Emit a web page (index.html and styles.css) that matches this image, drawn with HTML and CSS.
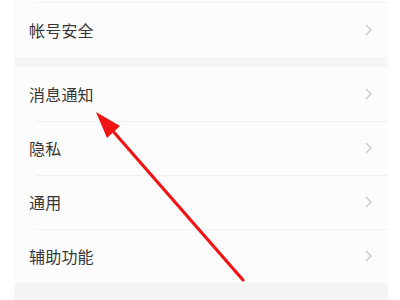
FILE: index.html
```html
<!DOCTYPE html>
<html lang="zh">
<head>
<meta charset="utf-8">
<link rel="stylesheet" href="styles.css">
</head>
<body>
<div class="page">
  <div class="card card-first">
    <div class="row sep"><span class="label">帐号安全</span><svg class="chev" width="7" height="12" viewBox="0 0 7 12"><polyline points="1,1 6,6 1,11"/></svg></div>
  </div>
  <div class="card">
    <div class="row"><span class="label">消息通知</span><svg class="chev" width="7" height="12" viewBox="0 0 7 12"><polyline points="1,1 6,6 1,11"/></svg></div>
    <div class="row sep"><span class="label">隐私</span><svg class="chev" width="7" height="12" viewBox="0 0 7 12"><polyline points="1,1 6,6 1,11"/></svg></div>
    <div class="row sep"><span class="label">通用</span><svg class="chev" width="7" height="12" viewBox="0 0 7 12"><polyline points="1,1 6,6 1,11"/></svg></div>
    <div class="row sep"><span class="label">辅助功能</span><svg class="chev" width="7" height="12" viewBox="0 0 7 12"><polyline points="1,1 6,6 1,11"/></svg></div>
  </div>
</div>
<svg class="arrow" width="400" height="300" viewBox="0 0 400 300">
  <line x1="243" y1="280" x2="112" y2="130" stroke="#f01414" stroke-width="3.2" stroke-linecap="round"/>
  <polygon points="96,112 120,126 107,138" fill="#f01414"/>
</svg>
</body>
</html>
```
FILE: styles.css
```css
html, body {
  margin: 0;
  padding: 0;
  background: #ffffff;
}
body {
  width: 400px;
  height: 300px;
  overflow: hidden;
  position: relative;
  font-family: "Noto Sans CJK SC", "Noto Sans", sans-serif;
}
.page {
  margin: 0 12px 0 14px;
  background: #f5f5f7;
  height: 300px;
  display: flex;
  flex-direction: column;
  gap: 10px;
}
.card {
  background: #fcfcfc;
}
.card-first {
  padding-top: 2px;
}
.row {
  position: relative;
  height: 54px;
  display: flex;
  align-items: center;
  justify-content: space-between;
  padding: 0 16px 0 15px;
}
.card-first .row {
  height: 55px;
}
.row.sep::before {
  content: "";
  position: absolute;
  left: 22px;
  right: 0;
  top: 0;
  height: 1px;
  background: #f0f0f2;
}
.label {
  font-size: 16px;
  color: #363636;
  letter-spacing: 0.2px;
}
.chev polyline {
  fill: none;
  stroke: #c6c6c8;
  stroke-width: 1.3;
}
.arrow {
  position: absolute;
  left: 0;
  top: 0;
}
```
